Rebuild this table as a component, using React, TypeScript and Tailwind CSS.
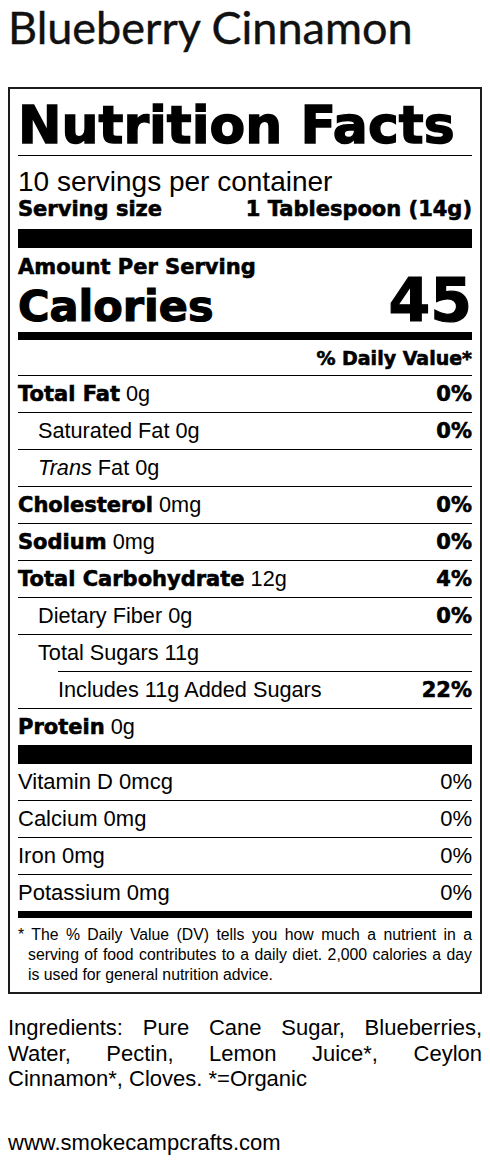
import React from 'react';

const BOLD = "font-['DejaVu_Sans',sans-serif] font-bold [-webkit-text-stroke:0.6px_black]";

type Nutrient = {
  label: React.ReactNode;
  amount: string;
  dv?: string;
  bold?: boolean;
  indent?: 0 | 1 | 2;
};

const NUTRIENTS: Nutrient[] = [
  { label: 'Total Fat', amount: '0g', dv: '0%', bold: true },
  { label: 'Saturated Fat', amount: '0g', dv: '0%', indent: 1 },
  { label: <><i>Trans</i> Fat</>, amount: '0g', indent: 1 },
  { label: 'Cholesterol', amount: '0mg', dv: '0%', bold: true },
  { label: 'Sodium', amount: '0mg', dv: '0%', bold: true },
  { label: 'Total Carbohydrate', amount: '12g', dv: '4%', bold: true },
  { label: 'Dietary Fiber', amount: '0g', dv: '0%', indent: 1 },
  { label: 'Total Sugars', amount: '11g', indent: 1 },
  { label: 'Includes 11g Added Sugars', amount: '', dv: '22%', indent: 2 },
  { label: 'Protein', amount: '0g', bold: true },
];

const VITAMINS = [
  { label: 'Vitamin D 0mcg', dv: '0%' },
  { label: 'Calcium 0mg', dv: '0%' },
  { label: 'Iron 0mg', dv: '0%' },
  { label: 'Potassium 0mg', dv: '0%' },
];

const NutrientRow: React.FC<{ item: Nutrient }> = ({ item }) => {
  const indentClass =
    item.indent === 1 ? 'pl-[20px]' : item.indent === 2 ? 'ml-[40px]' : '';
  return (
    <div className={`flex h-[37px] items-center justify-between border-t border-black ${indentClass}`}>
      <div className="text-[21.7px] leading-[24px]">
        {item.bold ? <span className={`${BOLD} text-[21px]`}>{item.label}</span> : item.label}
        {item.amount && <> {item.amount}</>}
      </div>
      {item.dv && <span className={`${BOLD} text-[21px] leading-[24px]`}>{item.dv}</span>}
    </div>
  );
};

const App: React.FC = () => {
  return (
    <div className="min-h-screen bg-white px-[8px] text-black font-['Liberation_Sans',Arial,sans-serif]">
      {/* Product name */}
      <h1 className="font-['Lato',sans-serif] text-[45px] leading-[54px] font-normal text-[#111] [-webkit-text-stroke:0.4px_#111]">
        Blueberry Cinnamon
      </h1>

      {/* Label */}
      <div className="mt-[33px] border-2 border-[#1c1c1c] px-[8px] pt-[10px] pb-[7px]">
        <div className="font-['DejaVu_Sans',sans-serif] font-bold [-webkit-text-stroke:1.4px_black] text-[52px] leading-[52px] pb-[4px] border-b border-black whitespace-nowrap">
          Nutrition Facts
        </div>

        <div className="pt-[11px] text-[28px] leading-[30px]">10 servings per container</div>
        <div className={`${BOLD} flex justify-between text-[21px] leading-[24px]`}>
          <span>Serving size</span>
          <span>1 Tablespoon (14g)</span>
        </div>
        <div className="mt-[8px] h-[19px] bg-black" />

        <div className={`${BOLD} pt-[7px] text-[21px] leading-[24px]`}>Amount Per Serving</div>
        <div className="font-['DejaVu_Sans',sans-serif] font-bold [-webkit-text-stroke:1.2px_black] mt-[1px] flex items-baseline justify-between">
          <span className="text-[43px] leading-[40px]">Calories</span>
          <span className="text-[60px] leading-[40px]">45</span>
        </div>
        <div className="mt-[6px] h-[8px] bg-black" />

        <div className={`${BOLD} pt-[6px] pb-[5px] text-right text-[19px] leading-[24px]`}>% Daily Value*</div>

        {NUTRIENTS.map((n, i) => (
          <NutrientRow key={i} item={n} />
        ))}

        <div className="h-[19px] bg-black" />

        {VITAMINS.map((v, i) => (
          <div
            key={v.label}
            className={`flex items-center justify-between text-[22px] leading-[24px] ${i === 0 ? 'h-[36px]' : 'h-[37px] border-t border-black'}`}
          >
            <span>{v.label}</span>
            <span>{v.dv}</span>
          </div>
        ))}

        <div className="h-[7px] bg-black" />

        <p className="pt-[7px] pl-[10px] -indent-[10px] text-justify text-[15.8px] leading-[20px]">
          * The % Daily Value (DV) tells you how much a nutrient in a serving of food contributes to a daily diet. 2,000
          calories a day is used for general nutrition advice.
        </p>
      </div>

      {/* Ingredients */}
      <p className="mt-[21px] text-justify text-[22px] leading-[25.5px]">
        Ingredients: Pure Cane Sugar, Blueberries, Water, Pectin, Lemon Juice*, Ceylon Cinnamon*, Cloves. *=Organic
      </p>

      <p className="mt-[38px] text-[22px] leading-[25px]">www.smokecampcrafts.com</p>
    </div>
  );
};

export default App;
